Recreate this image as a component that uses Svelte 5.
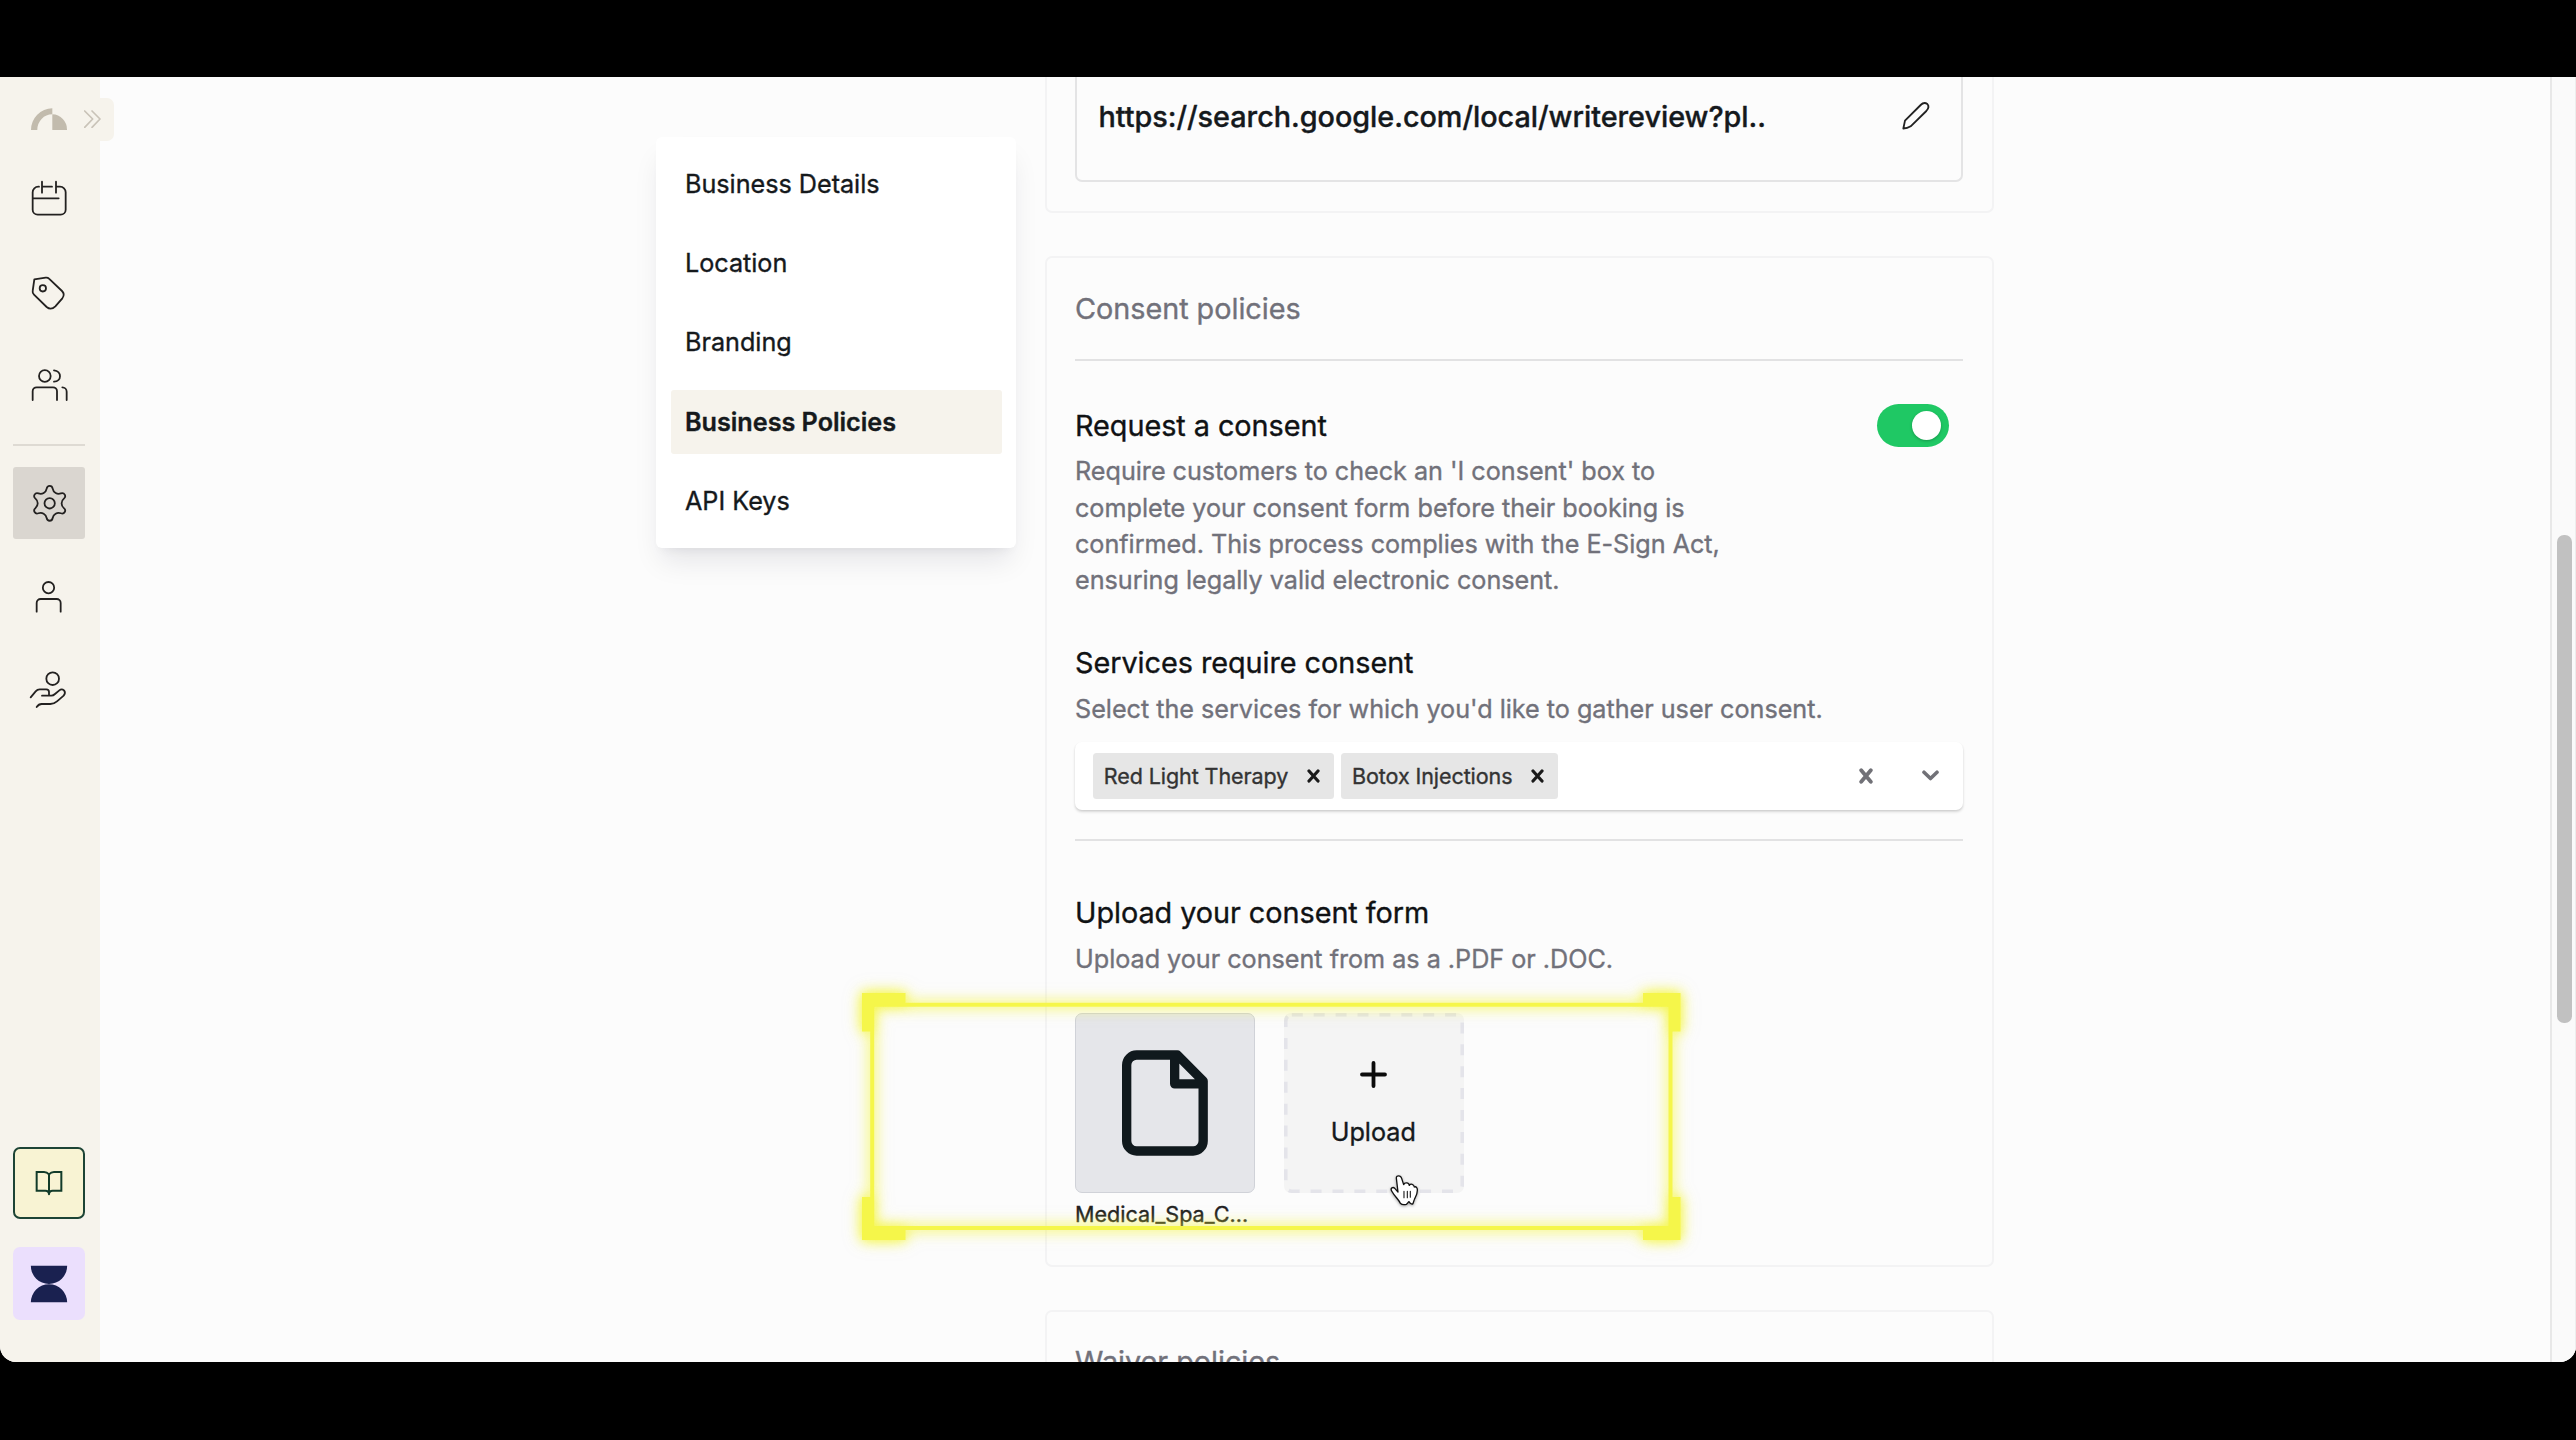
<script>
  const menu = ['Business Details', 'Location', 'Branding', 'Business Policies', 'API Keys'];
  const activeItem = 'Business Policies';
  const chips = ['Red Light Therapy', 'Botox Injections'];

  // One tooth of the gear, repeated six times around the centre.
  const gear = (() => {
    const tooth = [
      [-11, -35], [-10, -38], [-9, -44],
      [-7, -55], [7, -55], [9, -44],
      [10, -38], [11, -35], [18, -31]
    ];
    let d = 'M132 218';
    for (let k = 0; k < 6; k++) {
      const a = (k * Math.PI) / 3;
      d += 'C' + tooth
        .map(([x, y]) => `${(150 + x * Math.cos(a) - y * Math.sin(a)).toFixed(2)} ${(249 + x * Math.sin(a) + y * Math.cos(a)).toFixed(2)}`)
        .join(' ');
    }
    return d + 'Z';
  })();

  const topIcons = [
    { name: 'Calendar', box: '82 351 132 132', d: 'M118 380h-2a17 17 0 0 0-17 17V449a15 15 0 0 0 15 15H183a15 15 0 0 0 15-15V397a17 17 0 0 0-17-17H169M127 380H157M127 365V398M169 365V398M99 415H177' },
    { name: 'Services', box: '82 632 132 132', d: 'M104 657L138 652Q144 651 148 655L187 692Q197 702 188 714L167 738Q154 751 141 740L103 703Q98 698 99 692ZM120 684a9.5 9.5 0 1 0 19 0a9.5 9.5 0 1 0-19 0' },
    { name: 'Customers', box: '82 913 132 132', d: 'M118 949a17.5 17.5 0 1 0 35 0a17.5 17.5 0 1 0-35 0M163 932C187 934 187 965 163 966M99 1021V995a12 12 0 0 1 12-12H160a12 12 0 0 1 12 12V1021M188 983a13 13 0 0 1 13 13V1021' }
  ];
  const lowerIcons = [
    { name: 'Settings', active: true, box: '82 182 132 132', d: gear + 'M134.5 249a15.5 15.5 0 1 0 31 0a15.5 15.5 0 1 0-31 0' },
    { name: 'Profile', box: '82 463 132 132', d: 'M129.500 501a17 17 0 1 0 34 0a17 17 0 1 0-34 0M111 573V547a12 12 0 0 1 12-12H171a12 12 0 0 1 12 12V573' },
    { name: 'Payments', box: '82 744 132 132', d: 'M140 776a19 19 0 1 0 38 0a19 19 0 1 0-38 0M93 832L108 814Q113 808 120 808H140Q148 808 148 816V827M127 827H155Q161 827 166 822L179 811Q186 805 193 811Q199 819 192 827L172 844Q163 852 152 852H126Q117 852 111 861' }
  ];
</script>

<div class="stage">
  <div class="screen">
    <nav class="sidebar">
      <div class="brand">
        <div class="expander">
          <svg viewBox="252 151 50 54"><path d="M254 154L278 178L254 203M276 154L300 178L276 203" /></svg>
        </div>
        <svg class="logo" viewBox="94 145 108 66">
          <path d="M94 211A65 65 0 0 1 158 146V164A45 46 0 0 0 113 211Z" />
          <path d="M158 164A45 46 0 0 1 202 211H158Z" />
        </svg>
      </div>
      {#each topIcons as icon}
        <button class="nav-btn" aria-label={icon.name}><svg viewBox={icon.box}><path d={icon.d} /></svg></button>
      {/each}
      <div class="rule"></div>
      {#each lowerIcons as icon}
        <button class="nav-btn" class:active={icon.active} aria-label={icon.name}><svg viewBox={icon.box}><path d={icon.d} /></svg></button>
      {/each}
      <div class="spacer"></div>
      <button class="nav-btn guide" aria-label="Guide">
        <svg viewBox="82 121 132 132"><path d="M148 161Q142 154 133 154H111V210H137Q148 210 148 221Q148 210 159 210H185V154H163Q154 154 148 161V221" /></svg>
      </button>
      <button class="nav-btn account" aria-label="Account">
        <svg viewBox="82 424 132 132"><path d="M93.500 435.500H202.500A54.500 54.500 0 0 1 93.500 435.500ZM93.500 545A54.500 54.500 0 0 1 202.500 545Z" /></svg>
      </button>
    </nav>

    <main class="content">
      <aside class="menu">
        {#each menu as item}
          <a class="menu-item" class:selected={item === activeItem} href="#top">{item}</a>
        {/each}
      </aside>

      <div class="column">
        <section class="card review">
          <div class="link-box">
            <span class="url">https://search.google.com/local/writereview?pl..</span>
            <svg class="pencil" viewBox="1109 116 102 102"><path d="M1122 204.500L1127 181L1174 134Q1184 124 1194 131Q1202 140 1191 152L1144 198Q1134 204 1122 204.500Z" /></svg>
          </div>
        </section>

        <section class="card consent">
          <h2>Consent policies</h2>
          <hr />
          <div class="request">
            <h3>Request a consent</h3>
            <div class="toggle"><span class="knob"></span></div>
          </div>
          <p class="long">Require customers to check an 'I consent' box to<br />complete your consent form before their booking is<br />confirmed. This process complies with the E-Sign Act,<br />ensuring legally valid electronic consent.</p>

          <h3 class="services">Services require consent</h3>
          <p>Select the services for which you'd like to gather user consent.</p>
          <div class="select">
            {#each chips as chip}
              <span class="chip">{chip}<svg viewBox="0 0 13 14"><path d="M2 2L11 12M11 2L2 12" /></svg></span>
            {/each}
            <svg class="clear" viewBox="0 0 14 16"><path d="M2.200 2.200L11.800 13.800M11.800 2.200L2.200 13.800" /></svg>
            <svg class="caret" viewBox="0 0 17 11"><path d="M2 2.200L8.500 8.500L15 2.200" /></svg>
          </div>
          <hr class="second" />

          <h3 class="upload-title">Upload your consent form</h3>
          <p>Upload your consent from as a .PDF or .DOC.</p>
          <div class="files">
            <div class="file">
              <div class="thumb">
                <svg viewBox="846 241 258 318"><path d="M892 256H1012L1089.500 334V514a30 30 0 0 1-30 30H890a30 30 0 0 1-30-30V286a30 30 0 0 1 30-30ZM1004 260V342.500H1085" /></svg>
              </div>
              <span class="caption">Medical_Spa_C...</span>
            </div>
            <div class="dropzone">
              <svg class="dashes" viewBox="0 0 180 180">
                <rect x="1.800" y="1.800" width="176.400" height="176.400" rx="6" />
              </svg>
              <svg class="plus" viewBox="0 0 27 27"><path d="M13.500 2V25M2 13.500H25" /></svg>
              <span>Upload</span>
            </div>
          </div>
        </section>

        <section class="card waiver">
          <h2>Waiver policies</h2>
        </section>
      </div>
    </main>

    <div class="scrollbar"><div class="handle"></div></div>

    <svg class="highlight" viewBox="0 0 820 248">
      <path d="M0 0H43.500V9.700H781V0H818.500V38.500H810.500V204H818.500V247H781V237H43.500V247H0V204H8.200V38.500H0ZM12.200 13.700V233H806.500V13.700Z" />
    </svg>
    <svg class="pointer" viewBox="445 610 100 105">
      <path d="M470 625C470 616 483 616 486 626L492 645C495 637 508 638 509 647C513 641 523 643 524 652C530 649 534 656 533 663C533 675 526 683 524 690L520 702C516 705 512 702 508 696C505 697 504 702 500 704C493 706 487 706 482 701C478 690 466 682 456 664C451 655 460 650 466 657L475 667Z" />
      <path class="folds" d="M493 665V684M503 665V684M512 665V683" />
    </svg>
  </div>
</div>

<style>
  :global(body) { background: #000; }
  * { box-sizing: border-box; }
  .stage { width: 2576px; height: 1440px; background: #000; padding-top: 77px; overflow: hidden; font-family: Inter, sans-serif; color: #15191c; -webkit-text-stroke: 0.350px currentColor; }
  .screen { position: relative; display: flex; width: 2576px; height: 1285px; background: #fcfcfc; border-radius: 0 0 16px 16px; overflow: hidden; }
  svg { display: block; fill: none; stroke-linecap: round; stroke-linejoin: round; flex: none; }

  .sidebar { width: 100px; background: #f6f3ec; padding: 0 0 42.300px 13.100px; display: flex; flex-direction: column; gap: 21.200px; flex: none; }
  .brand { position: relative; height: 64.900px; padding: 31.300px 0 0 18.200px; }
  .logo { position: relative; width: 36px; height: 22px; fill: #c2bbad; }
  .expander { position: absolute; left: 60px; top: 20.600px; width: 41px; height: 43.200px; background: #f6f3ec; border-radius: 7px; display: flex; align-items: center; padding-left: 11px; }
  .expander svg { width: 16.700px; height: 18px; stroke: #c9c3b8; stroke-width: 5; }
  .nav-btn { width: 72.400px; height: 72.400px; border: 0; padding: 0; background: none; border-radius: 3px; display: flex; align-items: center; justify-content: center; flex: none; }
  .nav-btn svg { width: 44px; height: 44px; stroke: #232120; stroke-width: 5.400; }
  .nav-btn.active { background: #dad6d0; }
  .rule { width: 72.400px; height: 2px; background: #dedad3; flex: none; }
  .spacer { flex: 1; }
  .nav-btn.guide { background: #f8f3d3; border: 2px solid #1d4435; border-radius: 7px; margin-bottom: 7.200px; }
  .nav-btn.guide svg { stroke: #123b2a; stroke-width: 6; stroke-linejoin: miter; }
  .nav-btn.account { background: #ebdffd; border-radius: 7px; }
  .nav-btn.account svg { stroke: none; fill: #1a2150; }

  .content { flex: 1; display: flex; align-items: flex-start; padding-left: 556px; gap: 28.500px; height: 1285px; overflow: hidden; }
  .menu { width: 360px; margin-top: 60.200px; padding: 14.900px 14.400px 14.400px 15px; display: flex; flex-direction: column; gap: 14.500px; background: #fff; border-radius: 6px; box-shadow: 0 18px 27px -6px rgba(20, 20, 50, 0.1), 0 7px 11px -7px rgba(20, 20, 50, 0.08); flex: none; }
  .menu-item { height: 64.700px; line-height: 65.500px; padding-left: 14px; border-radius: 3px; font-size: 25.200px; letter-spacing: -0.020px; color: #15191c; text-decoration: none; white-space: nowrap; }
  .selected { background: #f6f3ec; font-weight: 600; }

  .column { width: 949px; display: flex; flex-direction: column; gap: 43.500px; flex: none; }
  .card { border: 2px solid #f3f3f4; border-radius: 7px; padding: 0 28.500px; flex: none; }
  .review { height: 135.500px; border-top: 0; border-radius: 0 0 7px 7px; }
  .link-box { height: 105px; border: 2px solid #e4e4e5; border-top: 0; border-radius: 0 0 7px 7px; display: flex; justify-content: space-between; align-items: flex-start; padding: 17.500px 27.600px 0 21.400px; }
  .url { font-size: 28.800px; line-height: 44px; font-weight: 500; letter-spacing: -0.030px; white-space: nowrap; }
  .pencil { width: 34px; height: 34px; margin-top: 4.400px; stroke: #222; stroke-width: 5.500; }

  h2, h3, p { margin: 0; font-weight: 400; white-space: nowrap; }
  h2 { font-size: 28.800px; line-height: 44px; color: #71717a; letter-spacing: -0.030px; }
  h3 { font-size: 28.800px; line-height: 44px; color: #101214; letter-spacing: -0.040px; }
  p { font-size: 25.200px; line-height: 36.200px; color: #71717a; margin-top: 6px; letter-spacing: -0.020px; }
  hr { border: 0; height: 2px; background: #e2e2e3; margin: 28px 0 0; }
  .consent { height: 1010.700px; padding-top: 28.500px; }
  .request { display: flex; justify-content: space-between; height: 44px; margin-top: 43.400px; padding-right: 14.400px; }
  .toggle { width: 72px; height: 43.600px; border-radius: 22px; background: #1fc864; padding: 7.200px; display: flex; justify-content: flex-end; }
  .knob { width: 29px; height: 29px; border-radius: 50%; background: #fff; box-shadow: 0 1px 3px rgba(0, 0, 0, 0.25); }
  .long { margin-top: 5.500px; }
  .services { margin-top: 43px; }
  .select { display: flex; align-items: center; height: 67.500px; margin-top: 14.800px; padding: 0 24px 0 18px; background: #fff; border-radius: 7px; box-shadow: 0 2px 3px rgba(0, 0, 0, 0.14), 0 1px 2px rgba(0, 0, 0, 0.06); }
  .chip { display: flex; align-items: center; height: 46.500px; margin-right: 7.300px; padding: 0 14px 0 10.800px; background: #e6e6e6; border-radius: 3.500px; font-size: 21.500px; color: #333; white-space: nowrap; letter-spacing: -0.080px; }
  .chip svg { width: 13px; height: 14px; margin-left: 18.800px; stroke: #1a1a1a; stroke-width: 3.200; }
  .clear { width: 14px; height: 16px; margin-left: auto; stroke: #717177; stroke-width: 3.800; }
  .caret { width: 17px; height: 11px; margin-left: 49px; stroke: #717177; stroke-width: 3.600; }
  hr.second { margin-top: 29.400px; }
  .upload-title { margin-top: 50px; }
  .files { display: flex; gap: 28.800px; margin-top: 35.900px; }
  .file { width: 180px; }
  .thumb { width: 180px; height: 180px; background: #e5e6ea; border: 1.800px solid #d0d2d8; border-radius: 7px; display: flex; align-items: center; justify-content: center; }
  .thumb svg { width: 86px; height: 106px; stroke: #10191d; stroke-width: 28; }
  .caption { display: block; font-size: 21.600px; line-height: 30px; margin-top: 6px; white-space: nowrap; color: #222; }
  .dropzone { position: relative; width: 180px; height: 180px; background: #f4f4f4; border-radius: 7px; display: flex; flex-direction: column; align-items: center; padding-top: 47.500px; font-size: 25.200px; line-height: 36px; }
  .dashes { position: absolute; inset: 0; width: 180px; height: 180px; stroke: #e4e4ea; stroke-width: 3.600; stroke-dasharray: 11 10.900; stroke-linecap: butt; }
  .plus { width: 27px; height: 27px; stroke: #0b0b0b; stroke-width: 3.800; }
  .dropzone span { margin: 26px 1px 0 0; }
  .waiver { height: 300px; padding-top: 27.500px; }

  .scrollbar { width: 26px; height: 1285px; border-left: 2px solid #e8e8e8; border-right: 1px solid #ededed; background: #fafafa; padding: 458px 0 0 5px; flex: none; }
  .handle { width: 14.500px; height: 487.500px; border-radius: 7px; background: #c1c1c1; }

  /* Callout frame and mouse pointer float over the page. */
  .highlight { position: absolute; left: 861.500px; top: 916px; width: 820px; height: 248px; overflow: visible; fill: #f5f64a; fill-rule: evenodd; filter: drop-shadow(0 0 7px rgba(244, 245, 60, 0.900)) drop-shadow(0 0 5px rgba(244, 245, 60, 0.500)); }
  .pointer { position: absolute; left: 1388.300px; top: 1096.300px; width: 33.300px; height: 35px; fill: #fff; stroke: #111; stroke-width: 4; filter: drop-shadow(0 1.500px 1.500px rgba(0, 0, 0, 0.35)); }
  .folds { stroke-width: 3.200; }
</style>
